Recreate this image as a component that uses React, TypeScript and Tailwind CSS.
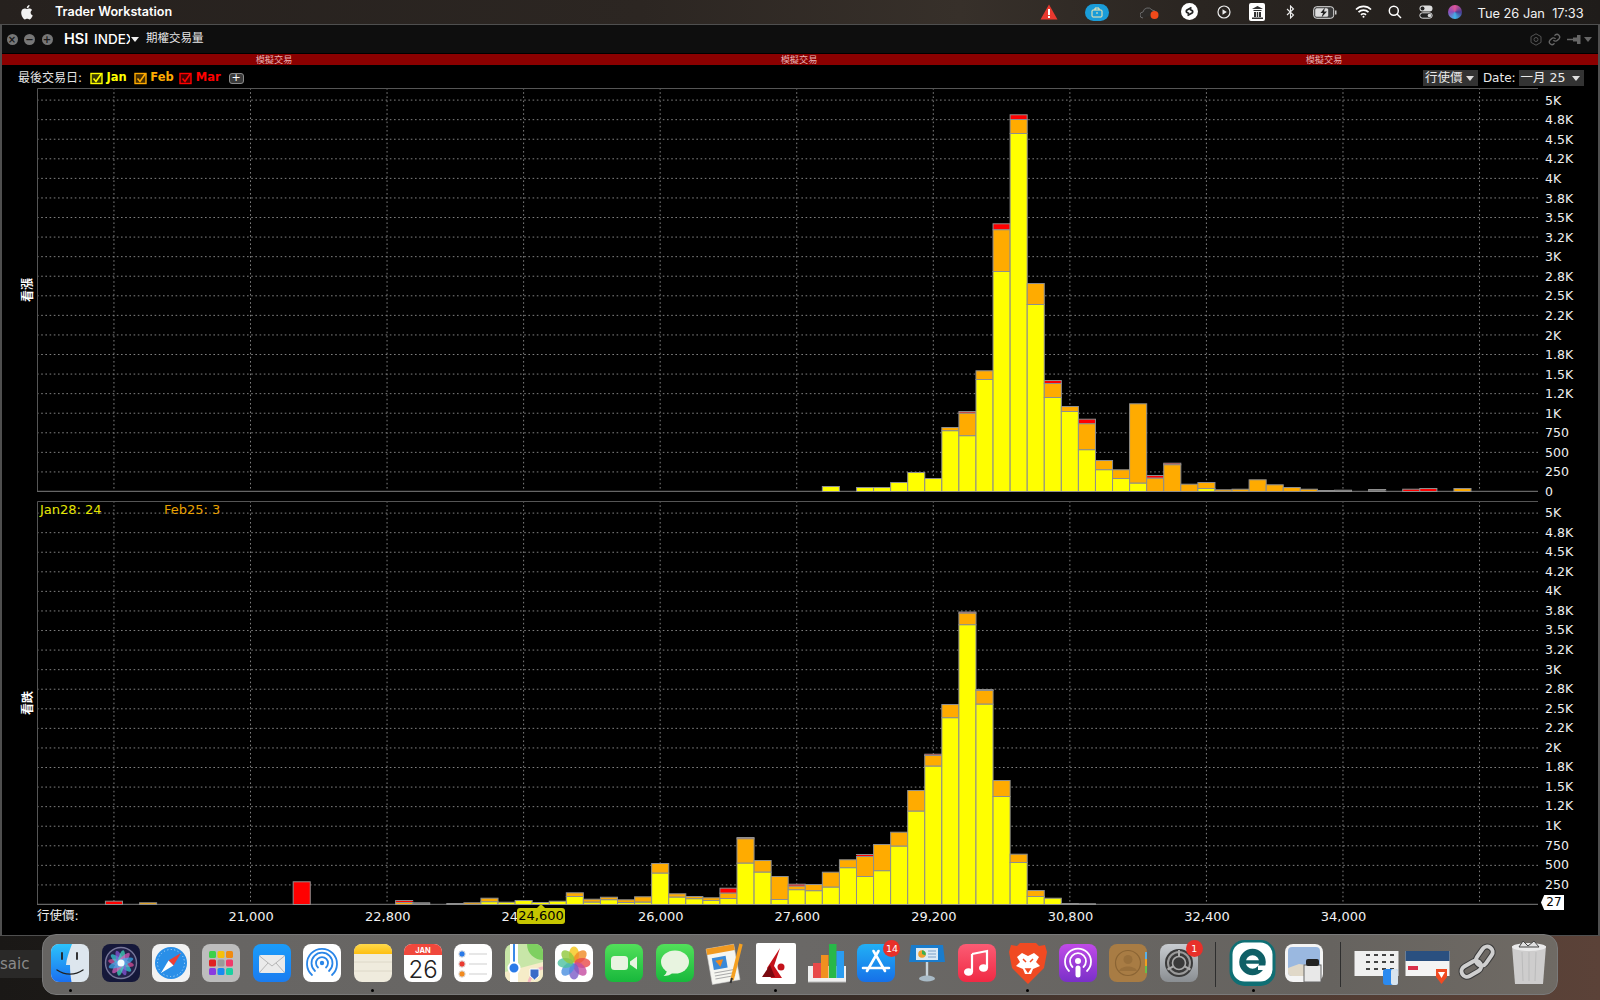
import type { ReactNode } from "react";

type Bar = [number, number, number?, number?, number?];

const CALLS: Bar[] = [
  [-6, 5], [-4, 4], [-3, 4], [-2, 9], [-1, 19], [0, 13], [1, 60.7, 64], [2, 55.7, 78.3, 80],
  [3, 112, 120.7], [4, 220, 261.7, 267.7], [5, 358, 372, 376.7], [6, 187, 208], [7, 94, 108, 111],
  [8, 80, 85], [9, 41.7, 67.7, 72.3], [10, 21.7, 31], [11, 13, 21.7], [12, 8.3, 87.7], [13, 0, 13.3, 16],
  [14, 0, 26.7, 28.3], [15, 0, 7.3], [16, 3, 9], [17, 0, 1.7], [18, 0, 2.3], [19, 0, 11.7], [20, 0, 6.7],
  [21, 0, 4], [22, 0, 2.3], [23, 0, 0, 0, 1], [24, 0, 0, 0, 1.3], [26, 0, 0, 0, 2], [28, 0, 0, 2.3],
  [29, 0, 0, 3], [31, 0, 3],
];

const PUTS: Bar[] = [
  [-48, 0, 0, 3.3], [-46, 0, 1.7], [-37, 0, 0, 22.7], [-31, 0, 2, 4], [-30, 0, 0, 0, 1.7], [-28, 0, 0, 0, 1],
  [-27, 0, 1.7], [-26, 2.7, 6.3], [-25, 2.3], [-24, 4], [-23, 2], [-22, 3.3], [-21, 8, 11.7], [-20, 2.3, 5.3],
  [-19, 4.7, 7.3], [-18, 2, 4.7], [-17, 2.3, 7.7], [-16, 31.3, 41], [-15, 7.3, 10.7], [-14, 5.7, 8],
  [-13, 4, 6.7], [-12, 6, 11.3, 16.3], [-11, 41.3, 65.7, 67], [-10, 32.3, 44], [-9, 5, 28], [-8, 14.7, 18.3, 20.3],
  [-7, 13.7, 20], [-6, 17.3, 32.3], [-5, 36.7, 44.7], [-4, 28, 48, 50], [-3, 33.7, 60], [-2, 58.3, 72.3],
  [-1, 93.3, 114], [0, 138.3, 149, 150.3], [1, 186.7, 200], [2, 279.7, 291.3, 292.5], [3, 200.3, 214, 215],
  [4, 108, 124], [5, 42, 50.3], [6, 8, 14], [7, 6.3], [8, 0, 0, 0, 1], [9, 0, 0, 0, 0.7],
];

const Y_LABELS = ["5K", "4.8K", "4.5K", "4.2K", "4K", "3.8K", "3.5K", "3.2K", "3K", "2.8K", "2.5K", "2.2K", "2K", "1.8K", "1.5K", "1.2K", "1K", "750", "500", "250", "0"];
const TICKS = [-6, -5, -4, -3, -2, -1, 0, 1, 2, 3, 4];
const STRIKES = ["21,000", "22,800", "24,400", "26,000", "27,600", "29,200", "30,800", "32,400", "34,000"];

const Plot = ({ bars }: { bars: Bar[] }) => {
  const base = 403.5;
  const bw = 17.07;
  const seg = (x: number, from: number, to: number, fill: string, key: string) => (
    <rect key={key} x={x} y={base - to} width={bw} height={to - from} fill={fill} stroke="#8e8e8e" strokeWidth="1" />
  );
  return (
    <svg width="1503" height="404" className="block">
      {Array.from({ length: 20 }, (_, i) => (
        <line key={i} x1="0" x2="1503" y1={base - (i + 1) * 19.57} y2={base - (i + 1) * 19.57} stroke="#808080" strokeDasharray="1.6 2.6" />
      ))}
      {TICKS.map((k) => (
        <line key={k} x1={896.3 + k * 136.56} x2={896.3 + k * 136.56} y1="0" y2={base + 3} stroke="#808080" strokeDasharray="1.6 2.6" />
      ))}
      <path d={`M0.5 ${base}V0.5H1502.5V${base}`} fill="none" stroke="#555" />
      <line x1="0" x2="1503" y1={base} y2={base} stroke="#666" strokeWidth="1.5" />
      {bars.map(([n, y, o = 0, r = 0, g = 0]) => {
        const x = 887.77 + n * bw;
        return (
          <g key={n}>
            {g > 0 && seg(x, 0, g, "#777", "g")}
            {r > 0 && seg(x, Math.max(o, y), r, "#ff0000", "r")}
            {o > 0 && seg(x, y, o, "#ffab00", "o")}
            {y > 0 && seg(x, 0, y, "#ffff00", "y")}
          </g>
        );
      })}
    </svg>
  );
};

const YAxis = ({ top }: { top: boolean }) => (
  <div className={`w-[60px] pl-[7px] h-[404px] ${top ? "pt-[3.4px]" : "pt-[2.6px]"}`}>
    {Y_LABELS.map((l) => (
      <div key={l} className="h-[19.57px] flex items-center text-[12.5px] text-[#f0f0f0]">
        {l}
      </div>
    ))}
  </div>
);

const Row = ({ label }: { label: string }) => (
  <div className="w-[37px] h-[404px] flex items-center justify-center pl-[18px] shrink-0">
    <span className="-rotate-90 whitespace-nowrap shrink-0 text-[12px] font-bold text-white">{label}</span>
  </div>
);

const Check = ({ color, dark }: { color: string; dark: string }) => (
  <svg width="13" height="13" viewBox="0 0 13 13" className="shrink-0">
    <rect x="1" y="1.5" width="11" height="10" fill={dark} stroke={color} strokeWidth="1.4" />
    <path d="M3.5 6.5 L6 9.5 L11.5 1.5" fill="none" stroke={color} strokeWidth="1.6" />
  </svg>
);

const Caret = ({ c = "#ddd" }: { c?: string }) => (
  <svg width="8" height="5" viewBox="0 0 8 5" className="shrink-0">
    <path d="M0 0H8L4 5Z" fill={c} />
  </svg>
);

const MenuBar = () => (
  <div className="h-[24px] flex items-center bg-[linear-gradient(90deg,#26211e,#2c2622_40%,#37302a_60%,#2a2521_75%,#1f1c1a)] text-white relative">
    <svg width="14" height="16" viewBox="0 0 14 16" className="ml-[20px]" fill="#f2f2f2">
      <path d="M10.6 8.5c0-1.7 1.4-2.5 1.5-2.6-.8-1.2-2.1-1.4-2.5-1.4-1.1-.1-2.1.6-2.6.6-.6 0-1.4-.6-2.3-.6C3.5 4.5 2.400 5.200 1.800 6.300.5 8.500 1.500 11.800 2.700 13.600c.6.900 1.300 1.800 2.200 1.800.9 0 1.200-.6 2.300-.6s1.400.6 2.300.6c1 0 1.600-.9 2.200-1.800.7-1 1-2 1-2.100 0 0-2.100-.8-2.100-3zM8.800 3.200c.5-.6.800-1.400.7-2.200-.7 0-1.500.5-2 1.100-.4.500-.8 1.300-.7 2.100.8.100 1.500-.4 2-1z" />
    </svg>
    <span className="ml-[21px] font-['Inter',sans-serif] text-[12.6px] font-semibold">Trader Workstation</span>
    <div className="ml-auto flex items-center relative h-full w-[567px]">
      <svg width="18" height="16" viewBox="0 0 18 16" className="absolute left-[7px] top-[4px]">
        <path d="M9 0.500L17.500 15.500H.500Z" fill="#e8392f" />
        <rect x="8" y="5" width="2" height="6" fill="#fff" />
        <rect x="8" y="12" width="2" height="2" fill="#fff" />
      </svg>
      <div className="absolute left-[52px] top-[3.5px] w-[24px] h-[17px] rounded-full bg-[#1a9cd8] flex items-center justify-center">
        <svg width="12" height="11" viewBox="0 0 12 11" fill="none" stroke="#ffe9b0" strokeWidth="1">
          <rect x="1" y="3" width="10" height="7" rx="1" />
          <path d="M4 3V1h4v2M5 6h2" />
        </svg>
      </div>
      <svg width="20" height="15" viewBox="0 0 20 15" className="absolute left-[107px] top-[5px]">
        <path d="M3 13a3 3 0 0 1 0-6 5 5 0 0 1 9-2 4 4 0 0 1 4 4" fill="#2c2a28" stroke="#6a6a6a" />
        <circle cx="14.500" cy="10" r="4" fill="#f04a1a" />
      </svg>
      <div className="absolute left-[147.5px] top-[3px] w-[17px] h-[17px] rounded-full bg-white flex items-center justify-center">
        <svg width="11" height="11" viewBox="0 0 11 11" fill="none" stroke="#222" strokeWidth="1.800">
          <path d="M7.500 1.500 3 4a1.500 1.500 0 0 0 0 2.500l2 1M3.500 9.500 8 7a1.500 1.500 0 0 0 0-2.500l-2-1" />
        </svg>
      </div>
      <svg width="14" height="14" viewBox="0 0 14 14" className="absolute left-[183.5px] top-[5px]" fill="none" stroke="#eee" strokeWidth="1.200">
        <circle cx="7" cy="7" r="6" />
        <path d="M5.500 4.200 9.800 7 5.500 9.800Z" fill="#eee" stroke="none" />
      </svg>
      <div className="absolute left-[216px] top-[3px] w-[16px] h-[18px] rounded-[2px] bg-white flex items-center justify-center">
        <svg width="11" height="13" viewBox="0 0 11 13" fill="#333">
          <path d="M5.500 0 11 3H0ZM1.500 4h8v1h-8ZM2 6h2v5H2ZM7 6h2v5H7ZM4.800 6h1.400v5H4.800ZM0 11.500h11V13H0Z" />
        </svg>
      </div>
      <svg width="9" height="14" viewBox="0 0 9 14" className="absolute left-[252.5px] top-[5px]" fill="none" stroke="#eee" strokeWidth="1.100">
        <path d="M1 4 7.500 10 4.500 13V1L7.500 4 1 10" />
      </svg>
      <svg width="24" height="13" viewBox="0 0 24 13" className="absolute left-[279.5px] top-[6px]">
        <rect x=".7" y=".7" width="20" height="11.600" rx="3" fill="#3a3a3a" stroke="#ddd" />
        <rect x="2.200" y="2.200" width="13" height="8.600" rx="1.500" fill="#ddd" />
        <path d="M12 1.500 7.500 7H10L8.500 11.500 14 5.500H11Z" fill="#222" />
        <rect x="22" y="4.500" width="1.500" height="4" fill="#ccc" />
      </svg>
      <svg width="17" height="13" viewBox="0 0 17 13" className="absolute left-[321.5px] top-[5px]" fill="none" stroke="#fff" strokeWidth="1.700">
        <path d="M1 4.500a10.500 10.500 0 0 1 15 0M3.500 7.200a7 7 0 0 1 10 0M6 9.800a3.500 3.500 0 0 1 5 0" />
        <circle cx="8.500" cy="11.800" r="1" fill="#fff" stroke="none" />
      </svg>
      <svg width="14" height="14" viewBox="0 0 14 14" className="absolute left-[355px] top-[5px]" fill="none" stroke="#fff" strokeWidth="1.500">
        <circle cx="5.800" cy="5.800" r="4.500" />
        <path d="M9 9l4 4" />
      </svg>
      <svg width="14" height="14" viewBox="0 0 14 14" className="absolute left-[385.5px] top-[5px]">
        <rect x=".500" y=".500" width="13" height="6" rx="3" fill="#ddd" />
        <circle cx="3.500" cy="3.500" r="2" fill="#222" />
        <rect x=".800" y="7.800" width="12.400" height="5.400" rx="2.700" fill="#222" stroke="#ddd" />
        <circle cx="10.500" cy="10.500" r="1.800" fill="#ddd" />
      </svg>
      <div className="absolute left-[415px] top-[5px] w-[14px] h-[14px] rounded-full bg-[conic-gradient(#e0559a,#4a3a90,#3fb5e8,#8a4fb8,#e0559a)]" />
      <span className="absolute left-[444.6px] top-[4px] font-['Inter',sans-serif] text-[12.8px] whitespace-pre text-[#f2f2f2]">Tue 26 Jan  17:33</span>
    </div>
  </div>
);

const TitleBar = () => (
  <div className="h-[29px] flex items-center text-white border-b border-[#000] bg-[#0e0e0e]">
    <div className="flex items-center gap-[6.5px] pl-[4.5px]">
      {["×", "−", "+"].map((s) => (
        <span key={s} className="w-[11px] h-[11px] rounded-full bg-[#777] text-[#1a1a1a] text-[10px] leading-[11px] text-center font-bold">
          {s}
        </span>
      ))}
    </div>
    <span className="ml-[11.5px] w-[24px] font-['Inter',sans-serif] text-[14.5px] font-semibold">HSI</span>
    <span className="ml-[6px] w-[36px] overflow-hidden whitespace-nowrap font-['Inter',sans-serif] text-[13.5px] font-medium">INDEX</span>
    <span className="ml-[1px]">
      <Caret c="#eee" />
    </span>
    <span className="ml-[7px] text-[11.5px] text-[#e8e8e8]">期權交易量</span>
    <div className="ml-auto flex items-center pr-[6px]">
      <svg width="12" height="13" viewBox="0 0 12 13" fill="none" stroke="#555">
        <path d="M6 .8 11 3.600V9.400L6 12.200 1 9.400V3.600Z" />
        <circle cx="6" cy="6.500" r="2" />
      </svg>
      <svg width="13" height="13" viewBox="0 0 24 24" fill="none" stroke="#666" strokeWidth="2.500" className="ml-[5.5px]">
        <path d="M10 13a5 5 0 0 0 7.500.5l3-3a5 5 0 0 0-7-7l-1.500 1.500" />
        <path d="M14 11a5 5 0 0 0-7.500-.5l-3 3a5 5 0 0 0 7 7l1.500-1.500" />
      </svg>
      <svg width="15" height="9" viewBox="0 0 15 9" fill="#666" className="ml-[6px]">
        <path d="M0 3.800h6v1.400H0ZM6 2.500h7.500v4H6ZM10 0h3.500v9H10Z" />
      </svg>
      <span className="ml-[2.5px]">
        <Caret c="#666" />
      </span>
    </div>
  </div>
);

const Toolbar = () => (
  <div className="h-[23px] flex items-center text-white pt-[3px]">
    <span className="ml-[16px] text-[12px] text-[#e6e6e6]">最後交易日:</span>
    <span className="ml-[8px] flex items-center gap-[3.5px]">
      <Check color="#ffff00" dark="#3a3a00" />
      <span className="text-[11.5px] font-bold text-[#ffff00]">Jan</span>
    </span>
    <span className="ml-[7px] flex items-center gap-[3.5px]">
      <Check color="#ffab00" dark="#4a3000" />
      <span className="text-[11.5px] font-bold text-[#ffab00]">Feb</span>
    </span>
    <span className="ml-[5.5px] flex items-center gap-[3.5px]">
      <Check color="#ff0000" dark="#4a0000" />
      <span className="text-[11.5px] font-bold text-[#ff0000]">Mar</span>
    </span>
    <span className="ml-[8px] w-[15px] h-[11px] rounded-[3px] bg-[#3a3a3a] border border-[#8a8a8a] text-[11px] leading-[8px] text-center">+</span>
    <div className="ml-auto flex items-center pr-[14.4px] text-[12px] text-[#eaeaea]">
      <span className="w-[55px] h-[16px] bg-[#333] flex items-center gap-[4px] pl-[2px] text-[12.5px]">
        行使價
        <Caret />
      </span>
      <span className="ml-[5px]">Date:</span>
      <span className="ml-[3px] w-[65px] h-[16px] bg-[#333] flex items-center pl-[2px] whitespace-pre text-[12.5px]">
        一月 25
        <span className="ml-auto pr-[4px]"><Caret /></span>
      </span>
    </div>
  </div>
);

const Xaxis = () => (
  <div className="relative h-[31px] text-[13px] text-[#f0f0f0]">
    <span className="absolute left-[37px] top-[2px] text-[12.5px]">行使價:</span>
    <div className="flex pl-[182.9px] pt-[2px]">
      {STRIKES.map((s) => (
        <span key={s} className="w-[136.56px] text-center">
          {s}
        </span>
      ))}
    </div>
    <div className="absolute left-[517px] top-[3px] w-[48px] h-[16px] rounded-[3px] bg-[#c6c600] text-black text-center leading-[16px]">24,600</div>
    <div className="absolute left-[537px] top-[-1px] w-0 h-0 border-x-[4px] border-x-transparent border-b-[4px] border-b-[#c6c600]" />
  </div>
);

const Win = () => (
  <div className="h-[912px] border-x-2 border-y border-[#4f4f4f] bg-black relative">
    <TitleBar />
    <div className="h-[11px] bg-[#8b0000] flex pl-[9.5px] items-center text-[9.2px] leading-[11px] text-[#e8b0b0]">
      <span className="w-[525px] text-center">模擬交易</span>
      <span className="w-[525px] text-center">模擬交易</span>
      <span className="w-[525px] text-center">模擬交易</span>
    </div>
    <Toolbar />
    <div className="flex -ml-[2px]">
      <Row label="看漲" />
      <Plot bars={CALLS} />
      <YAxis top />
    </div>
    <div className="flex -ml-[2px] mt-[9px] relative">
      <Row label="看跌" />
      <Plot bars={PUTS} />
      <YAxis top={false} />
      <div className="absolute left-[40px] top-[-1px] text-[13px] text-[#e6e600]">Jan28: 24</div>
      <div className="absolute left-[164px] top-[-1px] text-[13px] text-[#e8a000]">Feb25: 3</div>
      <div className="absolute left-[1541px] top-[394px] h-[15px] w-[23px] bg-white text-black text-[12px] leading-[15px] text-center [clip-path:polygon(0_50%,14%_0,100%_0,100%_100%,14%_100%)] pl-[3px]">27</div>
    </div>
    <div className="-ml-[2px]">
      <Xaxis />
    </div>
  </div>
);

const Box = ({ bg, children, r = 8 }: { bg: string; children?: ReactNode; r?: number }) => (
  <>
    <rect x="0" y="0" width="38" height="38" rx={r} fill={bg} />
    {children}
  </>
);

const Badge = ({ n }: { n: string }) => (
  <span className="absolute right-[-5px] top-[-4px] w-[17px] h-[17px] rounded-full bg-[#e8302a] text-white text-[9.5px] leading-[17px] text-center">{n}</span>
);

const Grad = ({ id, a, b, h }: { id: string; a: string; b: string; h?: boolean }) => (
  <linearGradient id={id} x1="0" y1="0" x2={h ? "1" : "0"} y2={h ? "0" : "1"}>
    <stop offset="0" stopColor={a} />
    <stop offset="1" stopColor={b} />
  </linearGradient>
);

const PETALS = ["#f5c518", "#f08a24", "#ea4a4a", "#c44ba0", "#7a5cc8", "#4a8fe0", "#4cc0a0", "#90c83c"];
const SIRI = ["#e0509a", "#38d0d8", "#8a5ae0", "#40e0c0", "#e060c0", "#3ab0f0"];

const ICONS: { key: string; dot?: boolean; badge?: string; sep?: boolean; art?: ReactNode }[] = [
  {
    key: "finder",
    dot: true,
    art: (
      <>
        <defs><Grad id="fb" a="#2cc3fa" b="#1a6ff0" /></defs>
        <Box bg="#dde6ee" />
        <path d="M8 0H21C18 8 15.500 15 15 21h4c0 6 .5 11 1.500 17H8a8 8 0 0 1-8-8V8a8 8 0 0 1 8-8Z" fill="url(#fb)" />
        <path d="M11 9v6M26 9v6" stroke="#222" strokeWidth="1.800" strokeLinecap="round" />
        <path d="M6 26c8 5.500 18 5.500 26 0" fill="none" stroke="#222" strokeWidth="1.400" strokeLinecap="round" />
      </>
    ),
  },
  {
    key: "siri",
    art: (
      <>
        <Box bg="#15183a" />
        <circle cx="19" cy="19" r="15.500" fill="#22224a" stroke="#77779a" strokeWidth="1.400" />
        {SIRI.map((c, i) => (
          <ellipse key={c} cx="19" cy="19" rx="13" ry="3.500" fill={c} opacity=".7" transform={`rotate(${i * 30 + 10} 19 19)`} />
        ))}
        <circle cx="19" cy="19" r="3.500" fill="#f0fbff" />
      </>
    ),
  },
  {
    key: "safari",
    art: (
      <>
        <Box bg="#f2f2f2" />
        <circle cx="19" cy="19" r="16" fill="#2a8fe8" />
        <circle cx="19" cy="19" r="13.500" fill="none" stroke="#bfe0fa" strokeDasharray="1 2.500" />
        <path d="M29 9 16.500 16.500 21.500 21.500Z" fill="#ee3f36" />
        <path d="M9 29 16.500 16.500 21.500 21.500Z" fill="#fff" />
      </>
    ),
  },
  {
    key: "launchpad",
    art: (
      <>
        <Box bg="#bdbdbd" />
        {[["#3dd04a", "#f5c00a", "#f08a10"], ["#e02020", "#9a9a9a", "#f03a6a"], ["#8a3ae0", "#1a8af0", "#1ad0a0"]].map((row, j) =>
          row.map((c, i) => <rect key={`${i}${j}`} x={7 + i * 8.500} y={7 + j * 8.500} width="7" height="7" rx="1.500" fill={c} />),
        )}
      </>
    ),
  },
  {
    key: "mail",
    art: (
      <>
        <defs><Grad id="ml" a="#1a9cfa" b="#1a7cf0" /></defs>
        <Box bg="url(#ml)" />
        <rect x="6" y="11" width="26" height="18" rx="2" fill="#eaeaea" />
        <path d="M6.500 12 19 22 31.500 12M6.500 28.500 15 19M31.500 28.500 23 19" fill="none" stroke="#b5b5b5" />
      </>
    ),
  },
  {
    key: "airdrop",
    art: (
      <>
        <Box bg="#fff" />
        <g fill="none" stroke="#2a86e8" strokeWidth="1.800" strokeLinecap="round">
          <path d="M9 31a15 15 0 1 1 20 0" />
          <path d="M12 27a10.500 10.500 0 1 1 14 0" />
          <path d="M15 23.500a6 6 0 1 1 8 0" />
        </g>
        <circle cx="19" cy="19" r="2.200" fill="#2a86e8" />
      </>
    ),
  },
  {
    key: "notes",
    dot: true,
    art: (
      <>
        <defs><Grad id="nt" a="#ffd94a" b="#fdbf12" /></defs>
        <Box bg="#efebdd" />
        <path d="M8 0H30a8 8 0 0 1 8 8V10H0V8a8 8 0 0 1 8-8Z" fill="url(#nt)" />
        <path d="M0 18H38M0 27H38" stroke="#ddd8c8" />
      </>
    ),
  },
  {
    key: "calendar",
    art: (
      <>
        <Box bg="#fff" />
        <path d="M8 0H30a8 8 0 0 1 8 8V11H0V8a8 8 0 0 1 8-8Z" fill="#f0483c" />
        <text x="19" y="9" textAnchor="middle" fontSize="7.500" fontWeight="700" fill="#fff" fontFamily="Inter">JAN</text>
        <text x="19" y="33.500" textAnchor="middle" fontSize="24" fontWeight="300" fill="#222" fontFamily="Inter">26</text>
      </>
    ),
  },
  {
    key: "reminders",
    art: (
      <>
        <Box bg="#fff" />
        {["#2a7ae8", "#ea3a30", "#f08a20"].map((c, i) => (
          <g key={c}>
            <circle cx="8" cy={10 + i * 10} r="3.200" fill={c} stroke="#ddd" />
            <line x1="15" x2="33" y1={10 + i * 10} y2={10 + i * 10} stroke="#ddd" strokeWidth="1.400" />
          </g>
        ))}
      </>
    ),
  },
  {
    key: "maps",
    art: (
      <>
        <Box bg="#c8e6a8" />
        <path d="M22 0H30a8 8 0 0 1 8 8V16C30 16 22 10 22 0Z" fill="#7ed060" />
        <path d="M0 28 38 18V30a8 8 0 0 1-8 8H8a8 8 0 0 1-8-8Z" fill="#f6ecc8" />
        <path d="M9 0V38" stroke="#fff" strokeWidth="8" />
        <path d="M9 0V20" stroke="#3a8ae8" strokeWidth="2" />
        <path d="M24 38C26 30 34 24 38 24" stroke="#f5b5c0" strokeWidth="3" fill="none" />
        <circle cx="9" cy="24" r="5.500" fill="#2a7ae8" stroke="#fff" strokeWidth="2" />
        <path d="M25 25H34V32L29.500 36 25 32Z" fill="#3a6ac8" stroke="#fff" />
      </>
    ),
  },
  {
    key: "photos",
    art: (
      <>
        <Box bg="#fff" />
        {PETALS.map((c, i) => (
          <ellipse key={c} cx="19" cy="10.500" rx="5" ry="8" fill={c} opacity=".8" transform={`rotate(${i * 45} 19 19)`} />
        ))}
      </>
    ),
  },
  {
    key: "facetime",
    art: (
      <>
        <defs><Grad id="ft" a="#52e05a" b="#18b83c" /></defs>
        <Box bg="url(#ft)" />
        <rect x="6" y="12" width="17" height="14" rx="3.500" fill="#e8f4e0" />
        <path d="M25 17.500 32 12.500V25.500L25 20.500Z" fill="#e8f4e0" />
      </>
    ),
  },
  {
    key: "messages",
    art: (
      <>
        <defs><Grad id="ms" a="#52e05a" b="#18b83c" /></defs>
        <Box bg="url(#ms)" />
        <ellipse cx="19" cy="18" rx="14" ry="11.500" fill="#e8f4e0" />
        <path d="M11 25C11 29 9 31 7.500 32 11 32 15 31 17 28Z" fill="#e8f4e0" />
      </>
    ),
  },
  {
    key: "pages",
    art: (
      <>
        <g transform="rotate(-10 19 20)">
          <rect x="3" y="2" width="28" height="36" fill="#f5f5f0" stroke="#ccc" strokeWidth=".5" />
          <rect x="3" y="2" width="28" height="6" fill="#f09a20" />
          <rect x="7" y="12" width="14" height="12" fill="#3a8ad8" />
          <path d="M10 15H18L14 22Z" fill="#f08a20" />
          <path d="M7 27H27M7 30H27M7 33H27" stroke="#aaa" />
        </g>
        <path d="M35 0 26 36" stroke="#f5a020" strokeWidth="3.500" />
        <path d="M26 34 24.500 39" stroke="#333" strokeWidth="2" />
      </>
    ),
  },
  {
    key: "ib",
    dot: true,
    art: (
      <>
        <rect x="-1" y="-1" width="40" height="41" rx="2" fill="#fff" />
        <path d="M23 4 10 24 14 34H25L17 22Z" fill="#c4121a" />
        <path d="M5 33 13 21 18 33Z" fill="#7a0a10" />
        <circle cx="24" cy="23" r="3.500" fill="#c4121a" />
      </>
    ),
  },
  {
    key: "numbers",
    art: (
      <>
        <path d="M1 22H39V38H1Z" fill="#f0f0f0" />
        <path d="M1 38H39" stroke="#bbb" />
        <rect x="6" y="19" width="8" height="15" fill="#e84a4a" />
        <rect x="14" y="11" width="7.500" height="23" fill="#f09020" />
        <rect x="22" y="0" width="7.500" height="34" fill="#28b848" />
        <rect x="29.500" y="7" width="7.500" height="27" fill="#2a9cf0" />
      </>
    ),
  },
  {
    key: "appstore",
    badge: "14",
    art: (
      <>
        <defs><Grad id="as" a="#22b0f5" b="#1670e8" /></defs>
        <Box bg="url(#as)" />
        <g stroke="#fff" strokeWidth="2.600" strokeLinecap="round" fill="none">
          <path d="M21.500 7 10 27M16.500 7 28 27M6 24H32" />
        </g>
      </>
    ),
  },
  {
    key: "keynote",
    art: (
      <>
        <path d="M3 1H35L37 18H1Z" fill="#1a7ccc" />
        <rect x="8" y="4" width="22" height="12" fill="#dceaf5" />
        <circle cx="14" cy="10" r="3.800" fill="#f0a030" />
        <path d="M14 10V6.200a3.800 3.800 0 0 1 3.500 5.300Z" fill="#3ab050" />
        <path d="M20 7H28M20 10H28M20 13H28" stroke="#7aa0c8" />
        <rect x="17.800" y="18" width="2.400" height="15" fill="#c8d4dc" />
        <ellipse cx="19" cy="34.500" rx="8" ry="3" fill="#a8bac6" />
      </>
    ),
  },
  {
    key: "music",
    art: (
      <>
        <defs><Grad id="mu" a="#fb5c74" b="#f02a44" /></defs>
        <Box bg="url(#mu)" />
        <path d="M14 10 29 7V24" fill="none" stroke="#fff" strokeWidth="2.200" />
        <path d="M14 10V28" stroke="#fff" strokeWidth="2.200" />
        <ellipse cx="10.500" cy="28" rx="4.500" ry="3.800" fill="#fff" />
        <ellipse cx="25.500" cy="24" rx="4.500" ry="3.800" fill="#fff" />
      </>
    ),
  },
  {
    key: "brave",
    dot: true,
    art: (
      <>
        <path d="M11 -1H27L30 2 36 1 38 8 35 24 19 40 3 24 0 8 2 1 8 2Z" fill="#f04a22" />
        <path d="M8 13 13 9 19 12 25 9 30 13 27 18 31 22 24 25 22 30H16L14 25 7 22 11 18Z" fill="#fff" />
        <path d="M14 15 17 18M24 15 21 18M17 25H21L19 28Z" stroke="#f04a22" strokeWidth="1.500" fill="#f04a22" />
      </>
    ),
  },
  {
    key: "podcasts",
    art: (
      <>
        <defs><Grad id="pd" a="#c04ae8" b="#7a30c8" /></defs>
        <Box bg="url(#pd)" />
        <g fill="none" stroke="#fff" strokeWidth="1.800" strokeLinecap="round">
          <path d="M10 27a13 13 0 1 1 18 0" />
          <path d="M13.500 23a8 8 0 1 1 11 0" />
        </g>
        <circle cx="19" cy="17" r="3" fill="#fff" />
        <rect x="16.500" y="21.500" width="5" height="12" rx="2.500" fill="#fff" />
      </>
    ),
  },
  {
    key: "contacts",
    art: (
      <>
        <Box bg="#a87c44" />
        <rect x="36" y="8" width="2" height="7" fill="#5ab0e8" />
        <rect x="36" y="15" width="2" height="7" fill="#f0a020" />
        <rect x="36" y="22" width="2" height="7" fill="#68c048" />
        <circle cx="19" cy="19" r="12.500" fill="none" stroke="#8a6434" strokeWidth="1.200" />
        <circle cx="19" cy="15.500" r="4.500" fill="#8a6434" opacity=".55" />
        <path d="M10 27c2-6 16-6 18 0" fill="#8a6434" opacity=".55" />
      </>
    ),
  },
  {
    key: "prefs",
    badge: "1",
    art: (
      <>
        <defs><Grad id="sp" a="#c8ccd0" b="#8a8e92" /></defs>
        <Box bg="url(#sp)" />
        <circle cx="19" cy="19" r="14" fill="#3a3a3a" />
        <circle cx="19" cy="19" r="11" fill="none" stroke="#9a9a9a" strokeWidth="2" />
        <circle cx="19" cy="19" r="6.500" fill="none" stroke="#aaa" strokeWidth="1.600" />
        <path d="M19 12.500V6M13.400 22.300 7.500 25.500M24.600 22.300 30.500 25.500" stroke="#aaa" strokeWidth="2" />
      </>
    ),
  },
  { key: "sep1", sep: true },
  {
    key: "eset",
    dot: true,
    art: (
      <>
        <rect x="-4.500" y="-4" width="46" height="46" rx="15" fill="#0f6f74" />
        <rect x="-1.500" y="-1.500" width="40" height="39" rx="12" fill="#fff" />
        <circle cx="18.500" cy="18" r="10" fill="none" stroke="#0f5f66" strokeWidth="6.500" />
        <path d="M9 18H29" stroke="#0f5f66" strokeWidth="3.500" />
        <path d="M24 21.500H32V26H24Z" fill="#fff" />
      </>
    ),
  },
  {
    key: "preview",
    art: (
      <>
        <Box bg="#f4f4f4" />
        <rect x="3" y="3" width="32" height="29" rx="4" fill="#9ab8e0" />
        <path d="M3 24 14 20 35 23V28a4 4 0 0 1-4 4H7a4 4 0 0 1-4-4Z" fill="#e0d8c8" />
        <rect x="19" y="21" width="17" height="17" fill="#e8e8e8" stroke="#666" />
        <rect x="21" y="15" width="13" height="7" rx="2" fill="#222" />
      </>
    ),
  },
  { key: "sep2", sep: true },
  {
    key: "stack1",
    art: (
      <>
        <rect x="-4.500" y="7" width="44" height="25" fill="#f0f0f0" />
        <path d="M7 11H38M7 18H38M7 25H38" stroke="#444" strokeWidth="1.800" strokeDasharray="4 4" />
        <rect x="24" y="25" width="15" height="16" rx="3" fill="#2a8af0" />
        <rect x="32" y="25" width="7" height="16" rx="2" fill="#d8e4ee" />
      </>
    ),
  },
  {
    key: "stack2",
    art: (
      <>
        <rect x="-3.500" y="7" width="44" height="25" fill="#f4f4f4" />
        <rect x="-3.500" y="7" width="44" height="10" fill="#2a5080" />
        <rect x="-1" y="22" width="10" height="4" fill="#d8304a" />
        <path d="M27 25H38V33L32.500 40 27 33Z" fill="#f04a22" />
        <path d="M29 28H36L32.500 34Z" fill="#fff" />
      </>
    ),
  },
  {
    key: "chain",
    art: (
      <>
        <g fill="none" stroke="#3a3a3a" strokeWidth="6">
          <rect x="19" y="2" width="11" height="21" rx="5.500" transform="rotate(35 25 12)" />
          <rect x="6" y="15" width="11" height="21" rx="5.500" transform="rotate(60 12 25)" />
        </g>
        <g fill="none" stroke="#cfcfcf" strokeWidth="4">
          <rect x="19" y="2" width="11" height="21" rx="5.500" transform="rotate(35 25 12)" />
          <rect x="6" y="15" width="11" height="21" rx="5.500" transform="rotate(60 12 25)" />
        </g>
      </>
    ),
  },
  {
    key: "trash",
    art: (
      <>
        <path d="M2 2H36L33 40H5Z" fill="#d8d8d8" opacity=".9" />
        <ellipse cx="19" cy="3" rx="17" ry="4" fill="#eaeaea" />
        <path d="M9 3 13 -3 18 2 24 -3 29 3Z" fill="#e0e0e0" stroke="#444" />
        <path d="M12 8 13 37M19 8V37M26 8 25 37" stroke="#bbb" />
      </>
    ),
  },
];

const Dock = () => (
  <div className="absolute left-[42px] top-[934px] w-[1516px] h-[61px] rounded-[14px] border border-[#7a7a7a] bg-[linear-gradient(90deg,#666462,#6a6866_50%,#66635f_85%,#6f6a64)] flex pl-[2px]">
    {ICONS.map((ic) =>
      ic.sep ? (
        <div key={ic.key} className="w-[24px] flex justify-center pt-[7px] pb-[7px]">
          <div className="w-px bg-[#2e2e2e]" />
        </div>
      ) : (
        <div key={ic.key} className="w-[50.4px] relative flex justify-center pt-[9px]">
          <div className="relative w-[38px] h-[38px]">
            <svg width="38" height="38" viewBox="0 0 38 38" overflow="visible" className="block">
              {ic.art}
            </svg>
            {ic.badge && <Badge n={ic.badge} />}
          </div>
          {ic.dot && <span className="absolute bottom-[2px] w-[3px] h-[3px] rounded-full bg-black" />}
        </div>
      ),
    )}
  </div>
);

export default function App() {
  return (
    <div className="w-[1600px] h-[1000px] relative overflow-hidden bg-[linear-gradient(90deg,#1a1816,#2a2420_40%,#4a3830_70%,#5b4238)] font-['DejaVu_Sans','Noto_Sans_CJK_TC',sans-serif]">
      <MenuBar />
      <Win />
      <div className="mt-[14px] w-[42px] h-[28px] bg-[#2a2928] text-[#8a8a8a] text-[15px] leading-[28px]">saic</div>
      <Dock />
    </div>
  );
}
